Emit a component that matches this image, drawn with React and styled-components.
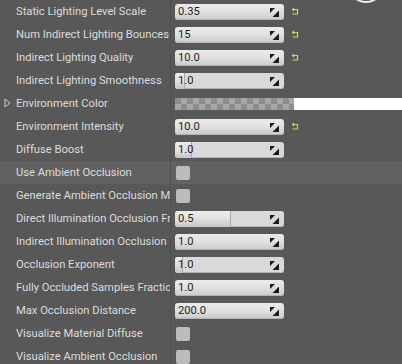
import React from 'react';
import styled, { createGlobalStyle } from 'styled-components';

const Global = createGlobalStyle`
  html, body {
    margin: 0;
    padding: 0;
    background: #585858;
    overflow: hidden;
  }
`;

const Panel = styled.div`
  position: relative;
  width: 402px;
  height: 364px;
  background: #585858;
  font-family: Roboto, "Noto Sans", sans-serif;
  font-size: 11.2px;
  overflow: hidden;
`;

const Row = styled.div`
  display: flex;
  align-items: center;
  height: 23px;
  background: ${p => (p.$hi ? '#616161' : 'transparent')};
`;

const Label = styled.div`
  position: relative;
  width: 154px;
  padding-left: 16px;
  height: 100%;
  display: flex;
  align-items: center;
  color: #dcdcdc;
  white-space: nowrap;
  overflow: hidden;
  border-right: 1px solid #505050;
`;

const Arrow = styled.svg`
  position: absolute;
  left: 4px;
  top: 6px;
`;

const Value = styled.div`
  flex: 1;
  display: flex;
  align-items: center;
  padding-left: 4px;
  height: 100%;
`;

const Box = styled.div`
  position: relative;
  width: 109px;
  height: 16px;
  border-radius: 3px;
  box-sizing: border-box;
  background: ${p => (p.$slider ? '#d9d9d9' : 'linear-gradient(#ececec, #dedede 55%, #c9c9c9)')};
  box-shadow: inset 0 -1px 0 #b4b4b4;
  overflow: hidden;
  display: flex;
  align-items: center;
`;

const Fill = styled.div`
  position: absolute;
  left: 0;
  top: 0;
  bottom: 0;
  background: linear-gradient(#ededed, #dedede 55%, #c6c6c6);
  border-right: 1px solid #a8a8a8;
`;

const Num = styled.span`
  position: relative;
  padding-left: 3px;
  color: #1e1e1e;
`;

const Spin = styled.svg`
  position: absolute;
  right: 5px;
  top: 4px;
`;

const Reset = styled.svg`
  margin-left: 7px;
  margin-top: -1px;
`;

const Check = styled.div`
  width: 14px;
  height: 14px;
  margin-left: 1px;
  border-radius: 2px;
  background: #bcbcbc;
`;

const Checker = styled.div`
  width: 119px;
  height: 12px;
  background-color: #8d8d8d;
  background-image: conic-gradient(#a6a6a6 25%, #8d8d8d 0 50%, #a6a6a6 0 75%, #8d8d8d 0);
  background-size: 12px 12px;
`;

const White = styled.div`
  flex: 1;
  height: 12px;
  background: #ffffff;
`;

const Mark = styled.svg`
  position: absolute;
  right: 0;
  top: -8px;
`;

const rows = [
  { label: 'Static Lighting Level Scale', type: 'num', value: '0.35', reset: true },
  { label: 'Num Indirect Lighting Bounces', type: 'num', value: '15', reset: true },
  { label: 'Indirect Lighting Quality', type: 'num', value: '10.0', reset: true },
  { label: 'Indirect Lighting Smoothness', type: 'num', value: '1.0', fill: 9 },
  { label: 'Environment Color', type: 'color', expand: true },
  { label: 'Environment Intensity', type: 'num', value: '10.0', reset: true },
  { label: 'Diffuse Boost', type: 'num', value: '1.0', fill: 16 },
  { label: 'Use Ambient Occlusion', type: 'check', hi: true },
  { label: 'Generate Ambient Occlusion Material', type: 'check' },
  { label: 'Direct Illumination Occlusion Fraction', type: 'num', value: '0.5', fill: 55 },
  { label: 'Indirect Illumination Occlusion Fraction', type: 'num', value: '1.0' },
  { label: 'Occlusion Exponent', type: 'num', value: '1.0', fill: 7 },
  { label: 'Fully Occluded Samples Fraction', type: 'num', value: '1.0' },
  { label: 'Max Occlusion Distance', type: 'num', value: '200.0' },
  { label: 'Visualize Material Diffuse', type: 'check' },
  { label: 'Visualize Ambient Occlusion', type: 'check' },
];

const SpinIcon = () => (
  <Spin width="9" height="9" viewBox="0 0 9 9">
    <polygon points="0,0 5,0 0,5" fill="#1a1a1a" />
    <polygon points="9,2.5 9,9 2.5,9" fill="#1a1a1a" />
  </Spin>
);

const ResetIcon = () => (
  <Reset width="8" height="8" viewBox="0 0 8 8">
    <path d="M1.5 2.5 H6.5 V7 H1.5" fill="none" stroke="#d2d25a" strokeWidth="1.2" />
    <path d="M3 1 L1.5 2.5 L3 4" fill="none" stroke="#d2d25a" strokeWidth="1.1" />
  </Reset>
);

const Field = ({ row }) => {
  if (row.type === 'check') return <Check />;
  if (row.type === 'color') {
    return (
      <>
        <Checker />
        <White />
      </>
    );
  }
  const slider = row.fill !== undefined;
  return (
    <>
      <Box $slider={slider}>
        {slider && <Fill style={{ width: row.fill }} />}
        <Num>{row.value}</Num>
        <SpinIcon />
      </Box>
      {row.reset && <ResetIcon />}
    </>
  );
};

export default function App() {
  return (
    <>
      <Global />
      <Panel>
        {rows.map(row => (
          <Row key={row.label} $hi={row.hi}>
            <Label>
              {row.expand && (
                <Arrow width="7" height="10" viewBox="0 0 7 10">
                  <path d="M1 1 L6 5 L1 9 Z" fill="none" stroke="#cfcfcf" strokeWidth="1" />
                </Arrow>
              )}
              {row.label}
            </Label>
            <Value>
              <Field row={row} />
            </Value>
          </Row>
        ))}
        <Mark width="52" height="14" viewBox="0 0 52 14">
          <ellipse cx="16" cy="4" rx="11" ry="6" fill="none" stroke="#f0f0f0" strokeWidth="2" />
        </Mark>
      </Panel>
    </>
  );
}
